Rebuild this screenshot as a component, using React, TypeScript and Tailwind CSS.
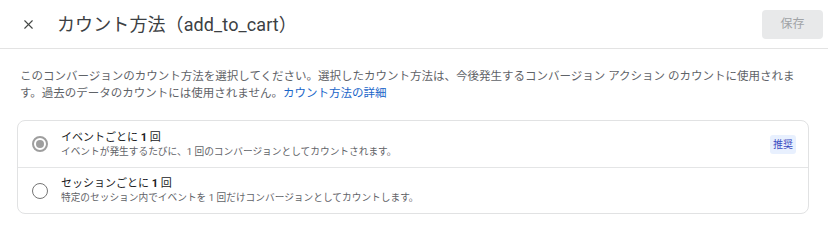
import { X } from 'lucide-react';

const font = 'font-["Roboto","Noto_Sans_CJK_JP",sans-serif]';

const Radio = ({ checked }: { checked: boolean }) =>
  checked ? (
    <span className="flex items-center justify-center w-[16px] h-[16px] rounded-full border-2 border-[#9e9e9e] shrink-0">
      <span className="w-[8px] h-[8px] rounded-full bg-[#9e9e9e]" />
    </span>
  ) : (
    <span className="w-[16px] h-[16px] rounded-full border-[1.5px] border-[#757575] shrink-0" />
  );

const options = [
  {
    title: 'イベントごとに',
    desc: 'イベントが発生するたびに、1 回のコンバージョンとしてカウントされます。',
    checked: true,
    badge: '推奨',
  },
  {
    title: 'セッションごとに',
    desc: '特定のセッション内でイベントを 1 回だけコンバージョンとしてカウントします。',
    checked: false,
  },
];

export default function App() {
  return (
    <div className={`w-[828px] h-[232px] bg-white text-[#202124] ${font}`}>
      <header className="h-[49px] flex items-center border-b border-[#e3e3e3] pl-[21px] pr-[5px]">
        <X size={15} strokeWidth={1.8} className="text-[#444746]" />
        <h1 className="ml-[21px] text-[18px] text-[#3c4043] tracking-[0.1px]">カウント方法（add_to_cart）</h1>
        <button className="ml-auto w-[61px] h-[29px] rounded-[4px] bg-[#e8e9ea] text-[12px] text-[#a0a3a6]">
          保存
        </button>
      </header>

      <div className="pl-[20px] pr-[32px] pt-[19px]">
        <p className="text-[11.5px] leading-[17px] text-[#5f6368]">
          このコンバージョンのカウント方法を選択してください。選択したカウント方法は、今後発生するコンバージョン アクション のカウントに使用されます。過去のデータのカウントには使用されません。
          <a className="text-[#1a66c9]">カウント方法の詳細</a>
        </p>
      </div>

      <div className="mt-[18px] ml-[17px] w-[792px] border border-[#e1e2e3] rounded-[8px]">
        {options.map((o, i) => (
          <div
            key={o.title}
            className={`flex items-center h-[46px] pl-[14px] pr-[12px] ${i > 0 ? 'border-t border-[#e4e5e6]' : ''}`}
          >
            <Radio checked={o.checked} />
            <div className="ml-[13px] flex flex-col">
              <span className="text-[11px] leading-[15px] text-[#202124]">
                {o.title} <b className="font-bold">1</b> 回
              </span>
              <span className="text-[9.7px] leading-[14px] text-[#5f6368]">{o.desc}</span>
            </div>
            {o.badge && (
              <span className="ml-auto w-[26px] h-[19px] flex items-center justify-center rounded-[3px] bg-[#e8f0fe] text-[10px] text-[#3b4cc0]">
                {o.badge}
              </span>
            )}
          </div>
        ))}
      </div>
    </div>
  );
}
